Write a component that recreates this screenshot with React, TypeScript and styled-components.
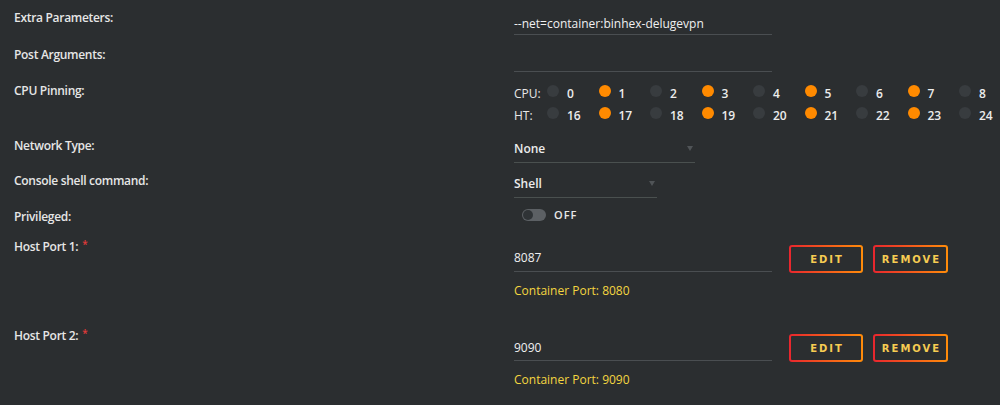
import React from "react";
import styled, { createGlobalStyle } from "styled-components";

const Global = createGlobalStyle`
  html, body { margin: 0; padding: 0; background: #2b2e30; }
  body { font-family: "Open Sans", "Liberation Sans", sans-serif; font-size: 12px; line-height: 16px; color: #e8e8e8; }
`;

const Page = styled.div`
  width: 1000px;
  height: 405px;
  padding: 10px 0 0 14px;
  box-sizing: border-box;
  background: #2b2e30;
  overflow: hidden;
`;

const Row = styled.div<{ $h?: number }>`
  display: grid;
  grid-template-columns: 500px 1fr;
  align-items: start;
  height: ${(p) => (p.$h ? `${p.$h}px` : "auto")};
`;

const Label = styled.div`
  font-weight: 600;
  color: #e6e6e6;
  letter-spacing: -0.3px;
`;

const Req = styled.span`
  color: #e23a3a;
  font-size: 10px;
  vertical-align: 3px;
  margin-left: 4px;
`;

const Value = styled.div``;

const TextInput = styled.div<{ $w?: number; $pt?: number; $h?: number }>`
  width: ${(p) => p.$w ?? 258}px;
  box-sizing: border-box;
  padding-top: ${(p) => p.$pt ?? 6}px;
  height: ${(p) => p.$h ?? 25}px;
  border-bottom: 1px solid #4a4e51;
  color: #f0f0f0;
  white-space: nowrap;
`;

const Select = styled.div<{ $w: number }>`
  width: ${(p) => p.$w}px;
  box-sizing: border-box;
  padding-top: 3px;
  height: 25px;
  border-bottom: 1px solid #4a504f;
  display: flex;
  justify-content: space-between;
  font-weight: 600;
  color: #ececec;
`;

const Caret = styled.span`
  width: 0;
  height: 0;
  border-left: 3px solid transparent;
  border-right: 3px solid transparent;
  border-top: 5px solid #505457;
  margin: 5px 2px 0 0;
`;

const PinGrid = styled.div`
  display: flex;
  flex-direction: column;
  gap: 6px;
  padding-top: 3px;
`;

const PinRow = styled.div`
  display: flex;
  align-items: center;
`;

const PinHead = styled.span`
  width: 33px;
  color: #e8e8e8;
`;

const Pin = styled.span`
  width: 51.5px;
  display: flex;
  align-items: center;
  gap: 8px;
  font-weight: 600;
  color: #ececec;
`;

const Dot = styled.span<{ $on: boolean }>`
  width: 12px;
  height: 12px;
  border-radius: 50%;
  background: ${(p) => (p.$on ? "#ff8a00" : "#383c3f")};
  flex: none;
  position: relative;
  top: -3px;
`;

const ToggleWrap = styled.div`
  display: flex;
  align-items: center;
  gap: 8px;
  height: 12px;
  padding-left: 8px;
`;

const Track = styled.span`
  width: 24px;
  height: 12px;
  border-radius: 6px;
  background: #5c6064;
  position: relative;
`;

const Knob = styled.span`
  position: absolute;
  left: 1px;
  top: 1px;
  width: 10px;
  height: 10px;
  border-radius: 50%;
  background: #2f3336;
`;

const ToggleText = styled.span`
  font-weight: 600;
  font-size: 11px;
  letter-spacing: 1px;
  color: #e8e8e8;
`;

const PortLine = styled.div`
  display: flex;
  align-items: flex-start;
`;

const Buttons = styled.div`
  display: flex;
  gap: 10px;
  margin-left: 17px;
  margin-top: 9px;
`;

const Btn = styled.button<{ $w: number }>`
  width: ${(p) => p.$w}px;
  height: 28px;
  border: 2px solid transparent;
  border-radius: 3px;
  background: linear-gradient(#2b2e30, #2b2e30) padding-box,
    linear-gradient(90deg, #e8262e, #ff8c0a) border-box;
  color: #f6cc52;
  font-family: "DejaVu Sans", sans-serif;
  font-weight: 700;
  font-size: 10px;
  letter-spacing: 2px;
  padding: 0 0 0 2px;
  cursor: pointer;
`;

const PortNote = styled.div`
  color: #f4d640;
  margin-top: 10px;
`;

const cpus = [0, 1, 2, 3, 4, 5, 6, 7, 8];
const hts = [16, 17, 18, 19, 20, 21, 22, 23, 24];

function PortRow({ n, host, cont, h, pt }: { n: number; host: string; cont: string; h?: number; pt: number }) {
  return (
    <Row $h={h}>
      <Label>
        Host Port {n}:<Req>*</Req>
      </Label>
      <Value>
        <PortLine>
          <TextInput $pt={pt} $h={36}>{host}</TextInput>
          <Buttons>
            <Btn $w={74}>EDIT</Btn>
            <Btn $w={75}>REMOVE</Btn>
          </Buttons>
        </PortLine>
        <PortNote>Container Port: {cont}</PortNote>
      </Value>
    </Row>
  );
}

export default function App() {
  return (
    <Page>
      <Global />
      <Row $h={37}>
        <Label>Extra Parameters:</Label>
        <Value>
          <TextInput>--net=container:binhex-delugevpn</TextInput>
        </Value>
      </Row>
      <Row $h={36}>
        <Label>Post Arguments:</Label>
        <Value>
          <TextInput />
        </Value>
      </Row>
      <Row $h={55}>
        <Label>CPU Pinning:</Label>
        <PinGrid>
          <PinRow>
            <PinHead>CPU:</PinHead>
            {cpus.map((c) => (
              <Pin key={c}>
                <Dot $on={c % 2 === 1} />
                {c}
              </Pin>
            ))}
          </PinRow>
          <PinRow>
            <PinHead>HT:</PinHead>
            {hts.map((c) => (
              <Pin key={c}>
                <Dot $on={c % 2 === 1} />
                {c}
              </Pin>
            ))}
          </PinRow>
        </PinGrid>
      </Row>
      <Row $h={35}>
        <Label>Network Type:</Label>
        <Value>
          <Select $w={181}>
            None
            <Caret />
          </Select>
        </Value>
      </Row>
      <Row $h={36}>
        <Label>Console shell command:</Label>
        <Value>
          <Select $w={143}>
            Shell
            <Caret />
          </Select>
        </Value>
      </Row>
      <Row $h={27}>
        <Label>Privileged:</Label>
        <ToggleWrap>
          <Track>
            <Knob />
          </Track>
          <ToggleText>OFF</ToggleText>
        </ToggleWrap>
      </Row>
      <PortRow n={1} host="8087" cont="8080" h={89} pt={14} />
      <PortRow n={2} host="9090" cont="9090" pt={15} />
    </Page>
  );
}
